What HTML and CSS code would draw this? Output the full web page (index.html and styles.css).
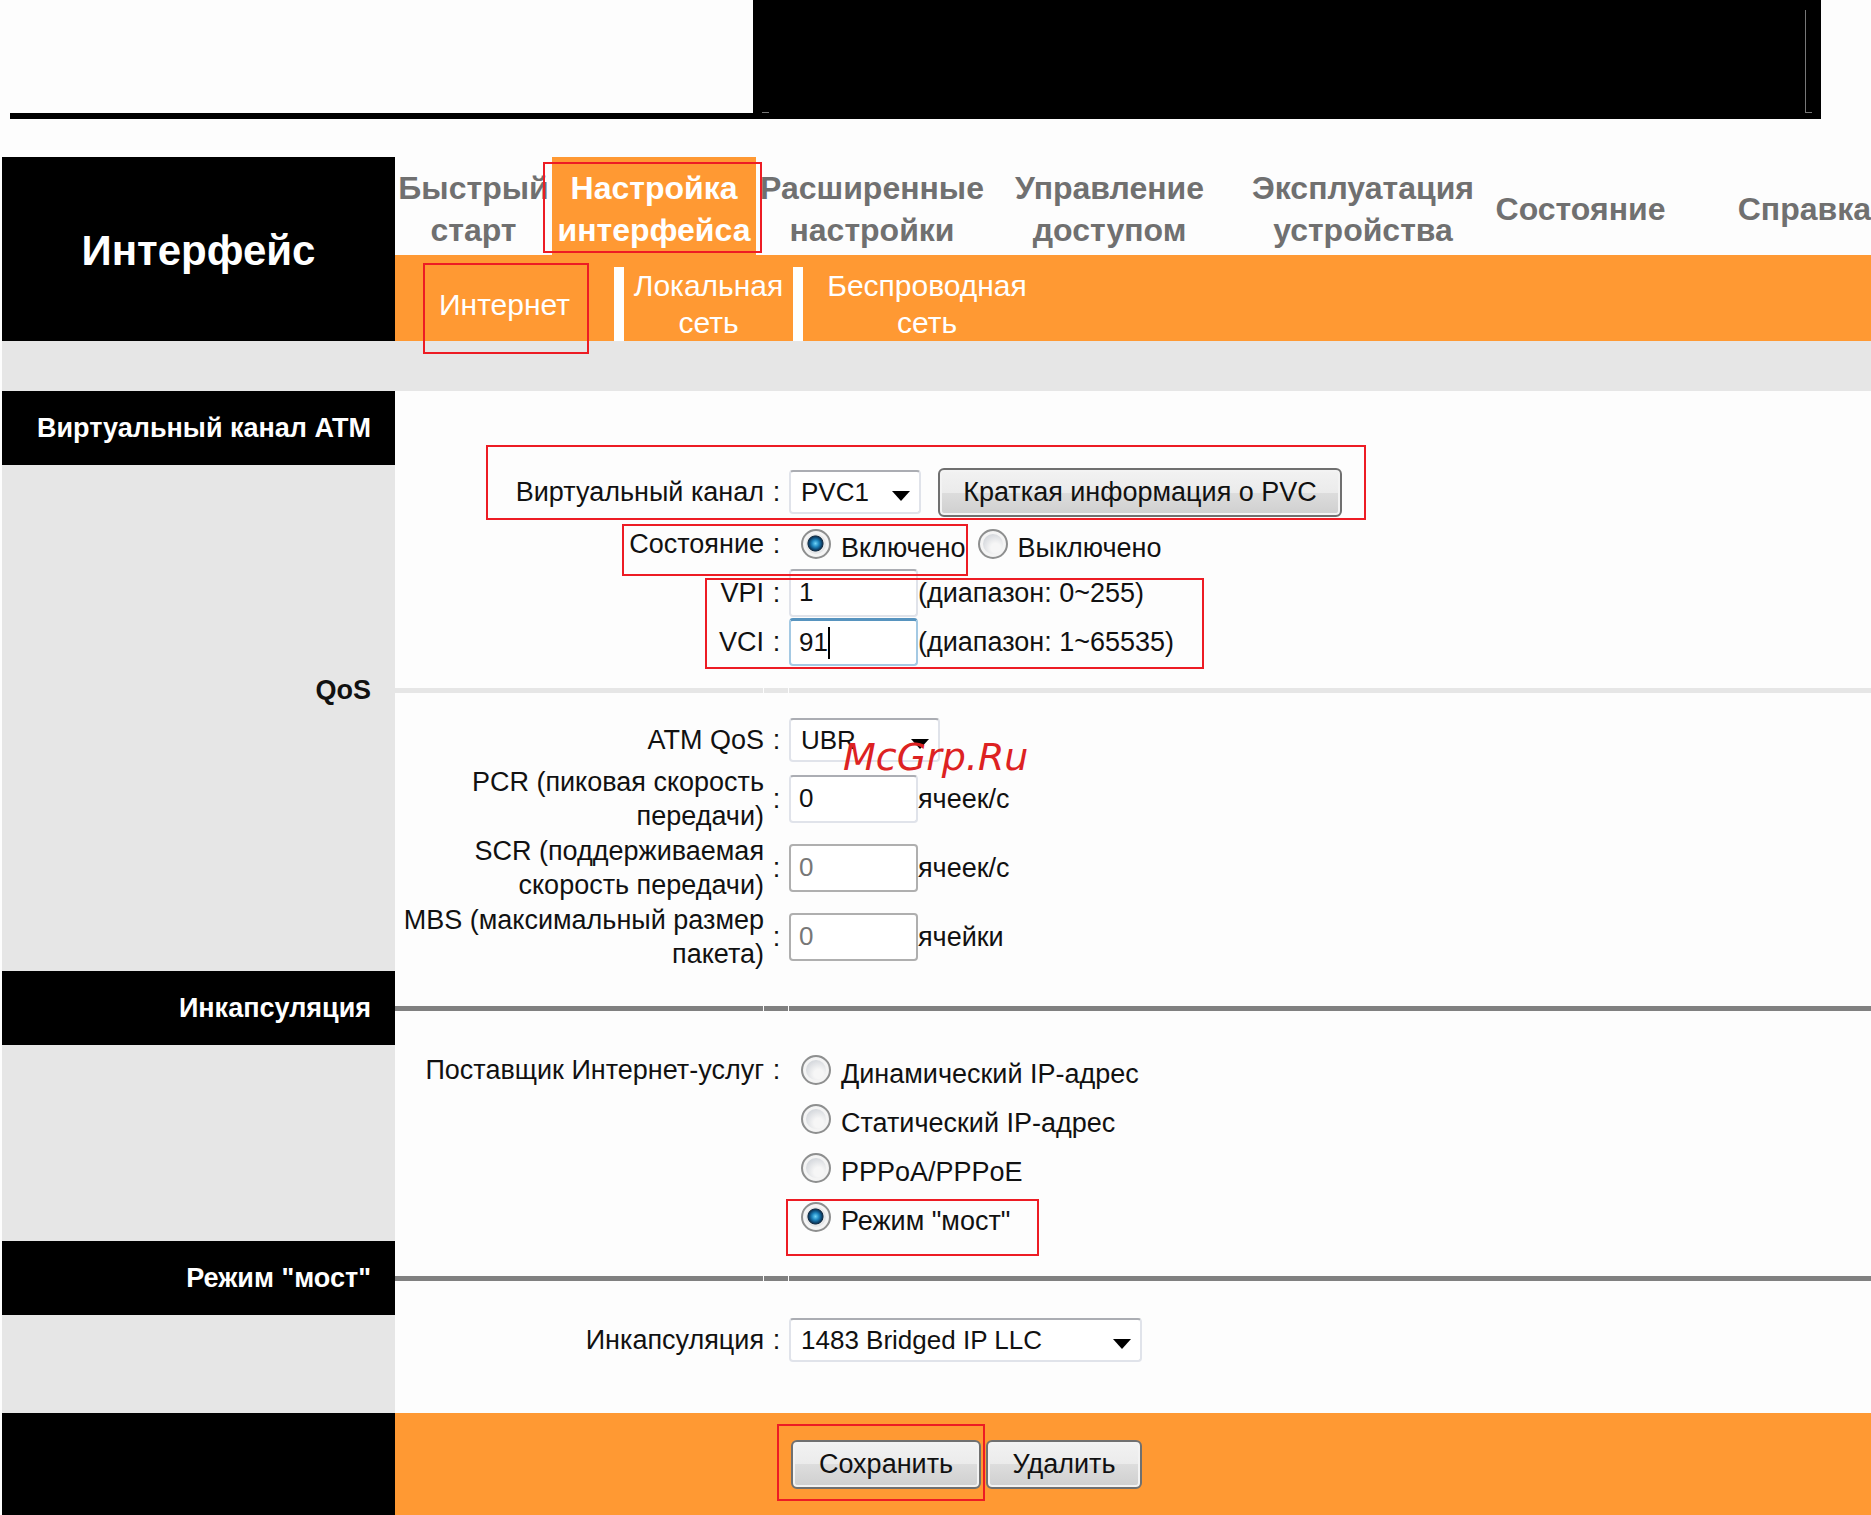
FILE: index.html
```html
<!DOCTYPE html>
<html lang="ru">
<head>
    <meta charset="UTF-8">
    <meta name="viewport" content="width=device-width, initial-scale=1.0">
    <title>Интерфейс</title>
    <link rel="stylesheet" href="styles.css">
</head>
<body>
    <div class="banner">
        <div class="banner-block">
            <span class="tick"></span>
            <span class="corner"></span>
        </div>
    </div>

    <div class="page">
        <header class="header">
            <h1 class="title">Интерфейс</h1>
            <div class="menus">
                <nav class="main-menu">
                    <a href="#">Быстрый старт</a>
                    <a href="#" class="active">Настройка интерфейса<span class="mark mark-menu"></span></a>
                    <a href="#">Расширенные настройки</a>
                    <a href="#">Управление доступом</a>
                    <a href="#">Эксплуатация устройства</a>
                    <a href="#">Состояние</a>
                    <a href="#" class="last">Справка</a>
                </nav>
                <nav class="sub-menu">
                    <a href="#">Интернет<span class="mark mark-submenu"></span></a>
                    <a href="#">Локальная сеть</a>
                    <a href="#">Беспроводная сеть</a>
                </nav>
            </div>
        </header>
        <div class="strip"></div>

        <form class="settings">
            <section class="section">
                <h2 class="section-title dark">Виртуальный канал ATM</h2>
                <div class="side"></div>
                <div class="fields">
                    <div class="row row-first">
                        <label for="pvc">Виртуальный канал</label>
                        <span class="colon">:</span>
                        <div class="control">
                            <span class="select w-pvc"><select id="pvc"><option>PVC1</option></select></span>
                            <button type="button" class="btn-info">Краткая информация о PVC</button>
                        </div>
                        <span class="mark mark-channel"></span>
                    </div>
                    <div class="row">
                        <span class="label" id="state-label">Состояние</span>
                        <span class="colon">:</span>
                        <div class="control" role="radiogroup" aria-labelledby="state-label">
                            <label class="radio"><input type="radio" name="state" checked><span>Включено</span></label>
                            <label class="radio"><input type="radio" name="state"><span>Выключено</span></label>
                        </div>
                        <span class="mark mark-state"></span>
                    </div>
                    <div class="row">
                        <label for="vpi">VPI</label>
                        <span class="colon">:</span>
                        <div class="control"><input type="text" id="vpi" value="1"><span>(диапазон: 0~255)</span></div>
                        <span class="mark mark-vpi"></span>
                    </div>
                    <div class="row">
                        <label for="vci">VCI</label>
                        <span class="colon">:</span>
                        <div class="control"><input type="text" id="vci" class="focused" value="91"><span>(диапазон: 1~65535)</span><span class="caret"></span></div>
                    </div>
                </div>
            </section>

            <section class="section">
                <h2 class="section-title">QoS</h2>
                <div class="line light"><i></i><i></i><i></i></div>
                <div class="side"></div>
                <div class="fields">
                    <div class="row">
                        <label for="qos">ATM QoS</label>
                        <span class="colon">:</span>
                        <div class="control"><span class="select w-qos"><select id="qos"><option>UBR</option></select></span></div>
                        <span class="watermark">McGrp.Ru</span>
                    </div>
                    <div class="row row-tall">
                        <label for="pcr">PCR (пиковая скорость передачи)</label>
                        <span class="colon">:</span>
                        <div class="control"><input type="text" id="pcr" value="0"><span>ячеек/с</span></div>
                    </div>
                    <div class="row row-tall">
                        <label for="scr">SCR (поддерживаемая скорость передачи)</label>
                        <span class="colon">:</span>
                        <div class="control"><input type="text" id="scr" value="0" disabled><span>ячеек/с</span></div>
                    </div>
                    <div class="row row-tall">
                        <label for="mbs">MBS (максимальный размер пакета)</label>
                        <span class="colon">:</span>
                        <div class="control"><input type="text" id="mbs" value="0" disabled><span>ячейки</span></div>
                    </div>
                </div>
            </section>

            <section class="section">
                <h2 class="section-title dark">Инкапсуляция</h2>
                <div class="line"><i></i><i></i><i></i></div>
                <div class="side"></div>
                <div class="fields" role="radiogroup" aria-labelledby="isp-label">
                    <div class="row">
                        <span class="label" id="isp-label">Поставщик Интернет-услуг</span>
                        <span class="colon">:</span>
                        <div class="control"><label class="radio"><input type="radio" name="isp"><span>Динамический IP-адрес</span></label></div>
                    </div>
                    <div class="row">
                        <div class="control"><label class="radio"><input type="radio" name="isp"><span>Статический IP-адрес</span></label></div>
                    </div>
                    <div class="row">
                        <div class="control"><label class="radio"><input type="radio" name="isp"><span>PPPoA/PPPoE</span></label></div>
                    </div>
                    <div class="row">
                        <div class="control"><label class="radio"><input type="radio" name="isp" checked><span>Режим "мост"</span></label></div>
                        <span class="mark mark-bridge"></span>
                    </div>
                </div>
            </section>

            <section class="section section-last">
                <h2 class="section-title dark">Режим "мост"</h2>
                <div class="line"><i></i><i></i><i></i></div>
                <div class="side"></div>
                <div class="fields">
                    <div class="row">
                        <label for="encap">Инкапсуляция</label>
                        <span class="colon">:</span>
                        <div class="control"><span class="select w-encap"><select id="encap"><option>1483 Bridged IP LLC</option></select></span></div>
                    </div>
                </div>
            </section>

            <footer class="footer">
                <div class="footer-side"></div>
                <div class="actions">
                    <button type="submit" class="btn-save">Сохранить</button>
                    <button type="button" class="btn-delete">Удалить</button>
                    <span class="mark mark-save"></span>
                </div>
            </footer>
        </form>
    </div>
</body>
</html>
```
FILE: styles.css
```css
* {
    box-sizing: border-box;
}
body {
    margin: 0;
    min-height: 100vh;
    display: flex;
    flex-direction: column;
    background-color: #fdfdfd;
    color: #111;
    font-family: "Liberation Sans", Arial, sans-serif;
    font-size: 27px;
    line-height: 34px;
    overflow-x: hidden;
}
a {
    text-decoration: none;
}
h1, h2 {
    margin: 0;
}

/* banner */
.banner {
    height: 119px;
    margin: 0 50px 38px 10px;
    border-bottom: 6px solid #000;
    display: flex;
    justify-content: flex-end;
}
.banner-block {
    width: 59%;
    background-color: #000;
    position: relative;
}
.tick {
    position: absolute;
    left: 9px;
    bottom: 0;
    width: 7px;
    height: 1px;
    background-color: #777;
}
.corner {
    position: absolute;
    right: 9px;
    top: 10px;
    bottom: 0;
    width: 7px;
    border-left: 1px solid #777;
    border-bottom: 1px solid #777;
}

/* header */
.page {
    flex: 1;
    display: flex;
    flex-direction: column;
    margin-left: 2px;
}
.header {
    display: grid;
    grid-template-columns: 393px 1fr;
}
.title {
    display: flex;
    align-items: center;
    justify-content: center;
    padding-top: 4px;
    background-color: #000;
    color: #fff;
    font-size: 42px;
    line-height: 48px;
}
.main-menu {
    display: grid;
    grid-template-columns: 157fr 204fr 232fr 243fr 264fr 171fr 205fr;
    height: 98px;
}
.main-menu a {
    position: relative;
    display: flex;
    align-items: center;
    justify-content: center;
    min-width: 0;
    padding-top: 6px;
    text-align: center;
    color: #707070;
    font-size: 32px;
    font-weight: bold;
    line-height: 42px;
}
.main-menu a.active {
    background-color: #ff9933;
    color: #fff;
}
.main-menu a.last {
    justify-content: flex-end;
}
.sub-menu {
    display: flex;
    height: 86px;
    padding-top: 12px;
    background-color: #ff9933;
}
.sub-menu a {
    position: relative;
    display: flex;
    align-items: center;
    justify-content: center;
    width: 219px;
    text-align: center;
    color: #fff;
    font-size: 30px;
    line-height: 37px;
}
.sub-menu a + a {
    width: 179px;
    border-left: 10px solid #fff;
}
.sub-menu a:last-child {
    width: 258px;
}
.strip {
    height: 50px;
    background-color: #e6e6e6;
}

/* form sections */
.settings {
    flex: 1;
    display: flex;
    flex-direction: column;
}
.section {
    display: grid;
    grid-template-columns: 393px 1fr;
}
.section-title {
    grid-column: 1;
    height: 49px;
    padding-right: 24px;
    background-color: #e6e6e6;
    font-size: 27px;
    line-height: 49px;
    text-align: right;
}
.section-title.dark {
    height: 74px;
    background-color: #000;
    color: #fff;
    line-height: 74px;
}
.side {
    grid-column: 1;
    background-color: #e6e6e6;
}
.fields {
    grid-column: 2;
}
.section-last .fields {
    padding-bottom: 49px;
}
.line {
    display: grid;
    grid-template-columns: 368px 24px 1fr;
    gap: 1px;
    align-items: center;
}
.line i {
    height: 5px;
    background-color: #808080;
}
.line.light i {
    background-color: #e6e6e6;
}
.row {
    position: relative;
    display: grid;
    grid-template-columns: 369px 25px 1fr;
    align-items: center;
    height: 49px;
}
.row-first {
    height: 54px;
}
.row-tall {
    height: 69px;
}
.row > label, .label {
    text-align: right;
}
.colon {
    text-align: center;
}
.control {
    grid-column: 3;
    position: relative;
    display: flex;
    align-items: center;
}

/* controls */
input[type="text"] {
    width: 129px;
    height: 48px;
    padding: 0 8px;
    border: 2px solid #e0e3ea;
    border-top-color: #abadb3;
    border-radius: 4px;
    background-color: #fff;
    color: #111;
    font-family: inherit;
    font-size: 26px;
}
input[type="text"].focused {
    border-color: #a4c9e3;
    border-top: 3px solid #5794bf;
}
input[type="text"]:disabled {
    border-color: #afafaf;
    color: #777;
}
.caret {
    position: absolute;
    left: 39px;
    top: 9px;
    width: 2px;
    height: 32px;
    background-color: #000;
}
.select {
    position: relative;
}
.select::after {
    content: "";
    position: absolute;
    right: 11px;
    top: 21px;
    border: 9px solid transparent;
    border-top: 10px solid #000;
    border-bottom: 0;
    pointer-events: none;
}
select {
    display: block;
    width: 100%;
    height: 44px;
    padding: 0 10px;
    border: 2px solid #e0e3ea;
    border-top-color: #abadb3;
    border-radius: 4px;
    background-color: #fff;
    color: #111;
    font-family: inherit;
    font-size: 26px;
    appearance: none;
}
.w-pvc {
    width: 132px;
}
.w-qos {
    width: 151px;
}
.w-encap {
    width: 353px;
}
button {
    height: 49px;
    padding: 0;
    border: 2px solid #707070;
    border-radius: 6px;
    background: linear-gradient(#f2f2f2, #ebebeb 50%, #dddddd 50%, #cfcfcf);
    box-shadow: inset 0 0 0 2px #f3f3f3;
    color: #111;
    font-family: inherit;
    font-size: 27px;
    cursor: pointer;
}
.btn-info {
    width: 404px;
    margin-left: 17px;
}
.btn-save {
    width: 190px;
}
.btn-delete {
    width: 156px;
}
.radio {
    display: flex;
    align-items: center;
    margin-left: 12px;
}
.radio span {
    padding-top: 8px;
}
input[type="radio"] {
    appearance: none;
    width: 30px;
    height: 30px;
    margin: 0 10px 0 0;
    border: 2px solid #8e8f8f;
    border-radius: 50%;
    background: radial-gradient(circle at 60% 65%, #f6f6f6 20%, #cbcfd5 75%);
    box-shadow: inset 0 0 0 3px #f4f4f4;
}
input[type="radio"]:checked {
    background: radial-gradient(circle at 48% 48%, #6fd3f7 0, #1f87c0 18%, #0b3f68 34%, #1b2f42 40%, #e4e6e8 44%);
}

/* red frames over the steps */
.mark {
    position: absolute;
    z-index: 1;
    border: 2px solid #ed1c24;
    pointer-events: none;
}
.mark-menu {
    inset: 5px -6px 2px -9px;
}
.mark-submenu {
    inset: -4px 25px -13px 28px;
}
.mark-channel {
    left: 91px;
    top: -20px;
    width: 880px;
    height: 75px;
}
.mark-state {
    left: 227px;
    top: 5px;
    width: 346px;
    height: 52px;
}
.mark-vpi {
    left: 310px;
    top: 10px;
    width: 499px;
    height: 91px;
}
.mark-bridge {
    left: 391px;
    top: 7px;
    width: 253px;
    height: 57px;
}
.mark-save {
    left: 382px;
    top: 11px;
    width: 208px;
    height: 77px;
}
.watermark {
    position: absolute;
    left: 448px;
    top: 20px;
    z-index: 1;
    color: #dd2222;
    font-family: "DejaVu Sans", sans-serif;
    font-size: 38px;
    font-style: italic;
    line-height: 44px;
}

/* footer */
.footer {
    flex: 1;
    display: grid;
    grid-template-columns: 393px 1fr;
}
.footer-side {
    background-color: #000;
}
.actions {
    position: relative;
    display: flex;
    align-items: flex-start;
    gap: 5px;
    padding: 27px 0 25px 396px;
    background-color: #ff9933;
}
```
